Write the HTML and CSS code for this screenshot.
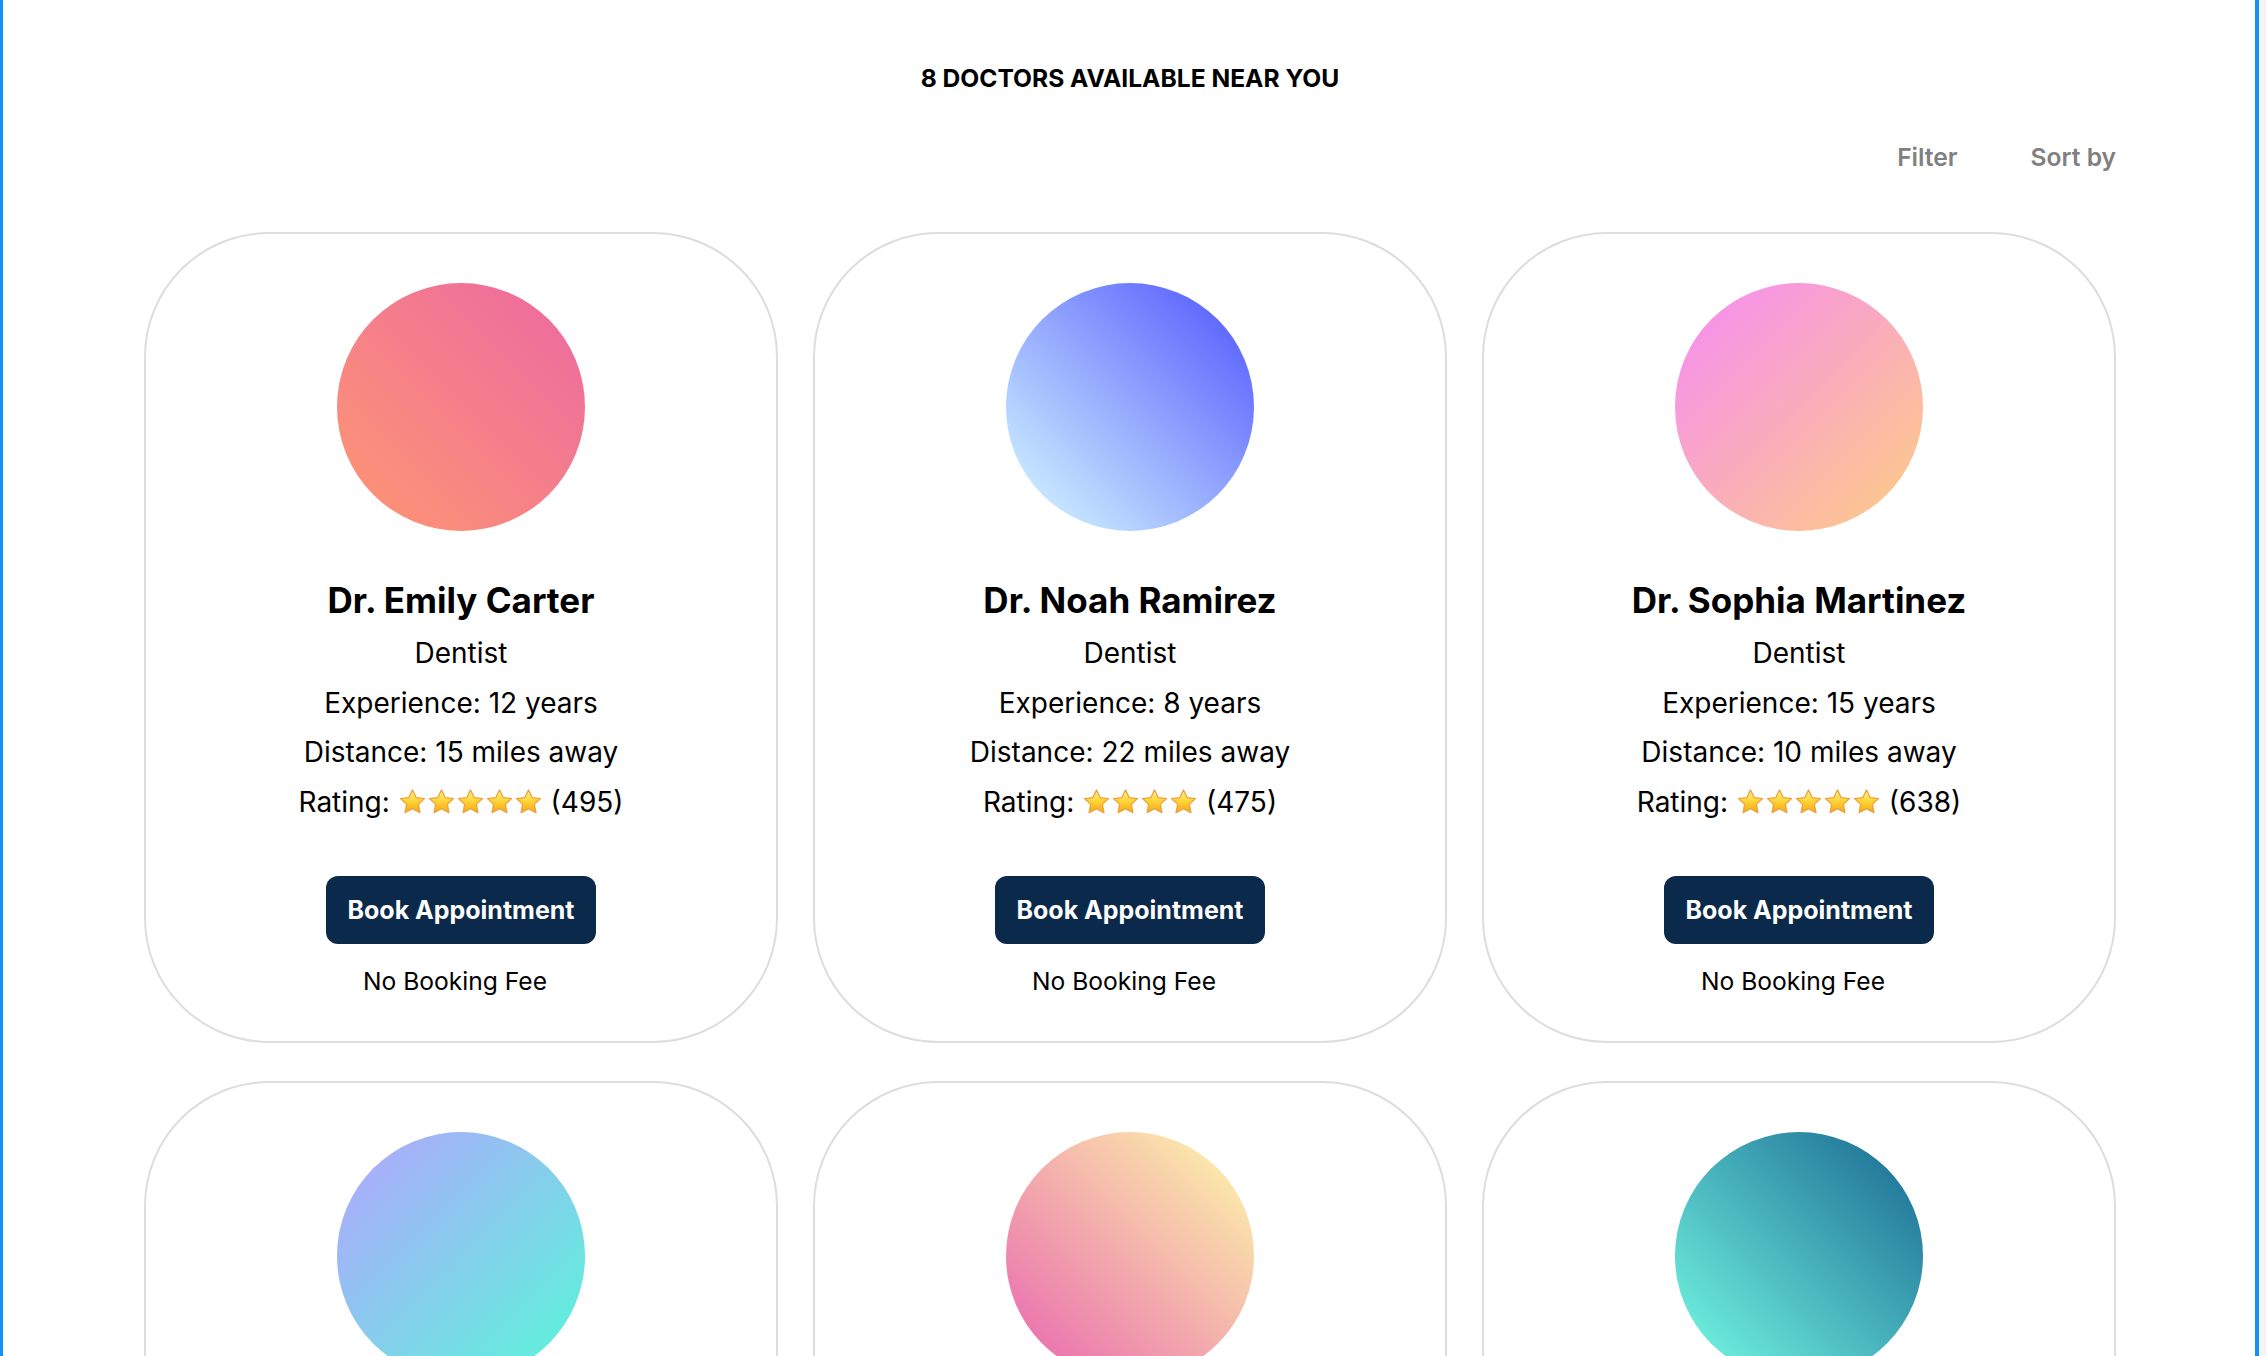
FILE: index.html
```html
<!DOCTYPE html>
<html lang="en">
<head>
<meta charset="utf-8">
<title>Doctors near you</title>
<link rel="stylesheet" href="styles.css">
</head>
<body>
<svg width="0" height="0" class="defs" aria-hidden="true">
  <defs>
    <linearGradient id="starfill" x1="0" y1="0" x2="0" y2="1">
      <stop offset="0" stop-color="#fff3a0"/>
      <stop offset="0.45" stop-color="#ffd83a"/>
      <stop offset="1" stop-color="#f6a819"/>
    </linearGradient>
    <symbol id="star" viewBox="0 0 24 24">
      <path d="M12 1.6l3 6.3 6.9.85-5.05 4.8 1.3 6.85L12 17.1 5.85 20.4l1.3-6.85L2.1 8.75l6.9-.85z" fill="url(#starfill)" stroke="#eea23a" stroke-width="1.1" stroke-linejoin="round"/>
    </symbol>
  </defs>
</svg>
<div class="app">
  <header class="head">
    <h1 class="title">8 DOCTORS AVAILABLE NEAR YOU</h1>
  </header>
  <div class="toolbar">
    <button class="tool">Filter</button>
    <button class="tool">Sort by</button>
  </div>
  <main class="grid">
    <article class="card">
      <div class="avatar av-1"></div>
      <h2 class="name">Dr. Emily Carter</h2>
      <p class="line">Dentist</p>
      <p class="line">Experience: 12 years</p>
      <p class="line">Distance: 15 miles away</p>
      <p class="line">Rating: <span class="stars"><svg class="star"><use href="#star"/></svg><svg class="star"><use href="#star"/></svg><svg class="star"><use href="#star"/></svg><svg class="star"><use href="#star"/></svg><svg class="star"><use href="#star"/></svg></span> (495)</p>
      <button class="book">Book Appointment</button>
      <p class="fee">No Booking Fee</p>
    </article>
    <article class="card">
      <div class="avatar av-2"></div>
      <h2 class="name">Dr. Noah Ramirez</h2>
      <p class="line">Dentist</p>
      <p class="line">Experience: 8 years</p>
      <p class="line">Distance: 22 miles away</p>
      <p class="line">Rating: <span class="stars"><svg class="star"><use href="#star"/></svg><svg class="star"><use href="#star"/></svg><svg class="star"><use href="#star"/></svg><svg class="star"><use href="#star"/></svg></span> (475)</p>
      <button class="book">Book Appointment</button>
      <p class="fee">No Booking Fee</p>
    </article>
    <article class="card">
      <div class="avatar av-3"></div>
      <h2 class="name">Dr. Sophia Martinez</h2>
      <p class="line">Dentist</p>
      <p class="line">Experience: 15 years</p>
      <p class="line">Distance: 10 miles away</p>
      <p class="line">Rating: <span class="stars"><svg class="star"><use href="#star"/></svg><svg class="star"><use href="#star"/></svg><svg class="star"><use href="#star"/></svg><svg class="star"><use href="#star"/></svg><svg class="star"><use href="#star"/></svg></span> (638)</p>
      <button class="book">Book Appointment</button>
      <p class="fee">No Booking Fee</p>
    </article>
    <article class="card">
      <div class="avatar av-4"></div>
      <h2 class="name">Dr. Liam Johnson</h2>
      <p class="line">Dentist</p>
      <p class="line">Experience: 10 years</p>
      <p class="line">Distance: 18 miles away</p>
      <p class="line">Rating: <span class="stars"><svg class="star"><use href="#star"/></svg><svg class="star"><use href="#star"/></svg><svg class="star"><use href="#star"/></svg><svg class="star"><use href="#star"/></svg></span> (412)</p>
      <button class="book">Book Appointment</button>
      <p class="fee">No Booking Fee</p>
    </article>
    <article class="card">
      <div class="avatar av-5"></div>
      <h2 class="name">Dr. Olivia Brown</h2>
      <p class="line">Dentist</p>
      <p class="line">Experience: 6 years</p>
      <p class="line">Distance: 12 miles away</p>
      <p class="line">Rating: <span class="stars"><svg class="star"><use href="#star"/></svg><svg class="star"><use href="#star"/></svg><svg class="star"><use href="#star"/></svg><svg class="star"><use href="#star"/></svg><svg class="star"><use href="#star"/></svg></span> (389)</p>
      <button class="book">Book Appointment</button>
      <p class="fee">No Booking Fee</p>
    </article>
    <article class="card">
      <div class="avatar av-6"></div>
      <h2 class="name">Dr. Ethan Wilson</h2>
      <p class="line">Dentist</p>
      <p class="line">Experience: 20 years</p>
      <p class="line">Distance: 25 miles away</p>
      <p class="line">Rating: <span class="stars"><svg class="star"><use href="#star"/></svg><svg class="star"><use href="#star"/></svg><svg class="star"><use href="#star"/></svg><svg class="star"><use href="#star"/></svg><svg class="star"><use href="#star"/></svg></span> (702)</p>
      <button class="book">Book Appointment</button>
      <p class="fee">No Booking Fee</p>
    </article>
    <article class="card">
      <div class="avatar av-1"></div>
      <h2 class="name">Dr. Ava Thompson</h2>
      <p class="line">Dentist</p>
      <p class="line">Experience: 9 years</p>
      <p class="line">Distance: 14 miles away</p>
      <p class="line">Rating: <span class="stars"><svg class="star"><use href="#star"/></svg><svg class="star"><use href="#star"/></svg><svg class="star"><use href="#star"/></svg><svg class="star"><use href="#star"/></svg></span> (356)</p>
      <button class="book">Book Appointment</button>
      <p class="fee">No Booking Fee</p>
    </article>
    <article class="card">
      <div class="avatar av-2"></div>
      <h2 class="name">Dr. Mason Lee</h2>
      <p class="line">Dentist</p>
      <p class="line">Experience: 14 years</p>
      <p class="line">Distance: 9 miles away</p>
      <p class="line">Rating: <span class="stars"><svg class="star"><use href="#star"/></svg><svg class="star"><use href="#star"/></svg><svg class="star"><use href="#star"/></svg><svg class="star"><use href="#star"/></svg><svg class="star"><use href="#star"/></svg></span> (521)</p>
      <button class="book">Book Appointment</button>
      <p class="fee">No Booking Fee</p>
    </article>
  </main>
</div>
</body>
</html>
```

FILE: styles.css
```css
* { box-sizing: border-box; }

html, body {
  margin: 0;
  padding: 0;
}

body {
  background: #f4f4f4;
  font-family: Inter, "Noto Sans", "Liberation Sans", sans-serif;
  color: #000;
  overflow: hidden;
}

.defs {
  position: absolute;
  width: 0;
  height: 0;
}

.app {
  width: 2259px;
  height: 100vh;
  overflow: hidden;
  background: #fff;
  border-left: 3px solid #1a8ef4;
  border-right: 4px solid #1a8ef4;
  padding-left: 2px;
  display: flex;
  flex-direction: column;
  align-items: center;
}

.head {
  padding-top: 63px;
}

.title {
  margin: 0;
  font-size: 24.6px;
  line-height: 30px;
  font-weight: 700;
  text-align: center;
}

.toolbar {
  width: 1972px;
  display: flex;
  justify-content: flex-end;
  gap: 73px;
  margin-top: 49px;
}

.tool {
  border: 0;
  background: none;
  padding: 0;
  font-family: inherit;
  font-size: 24.6px;
  line-height: 30px;
  font-weight: 600;
  color: #808080;
}

.grid {
  margin-top: 60px;
  display: grid;
  grid-template-columns: repeat(3, 634px);
  gap: 38px 35px;
}

.card {
  border: 2px solid #dddddd;
  border-radius: 125px;
  padding: 49px 20px 45px;
  display: flex;
  flex-direction: column;
  align-items: center;
  text-align: center;
}

.avatar {
  width: 248px;
  height: 248px;
  border-radius: 50%;
}

.av-1 { background: linear-gradient(45deg, #fe9771, #ec68a2); }
.av-2 { background: linear-gradient(45deg, #dafeff, #4c52fe); }
.av-3 { background: linear-gradient(135deg, #f68af6, #fdce82); }
.av-4 { background: linear-gradient(135deg, #b4a4ff, #56f8d8); }
.av-5 { background: linear-gradient(45deg, #e862af, #fffcaa); }
.av-6 { background: linear-gradient(45deg, #78ffe6, #176590); }

.name {
  margin: 48px 0 8px;
  font-size: 35px;
  line-height: 42px;
  font-weight: 700;
}

.line {
  margin: 0;
  font-size: 28px;
  line-height: 49.5px;
  display: flex;
  align-items: center;
  white-space: pre;
}

.stars {
  display: inline-flex;
}

.star {
  width: 29px;
  height: 29px;
}

.book {
  margin-top: 49px;
  height: 68px;
  padding: 0 21px;
  border: 0;
  border-radius: 12px;
  background: #0b2a4b;
  color: #fff;
  font-family: inherit;
  font-size: 25px;
  font-weight: 700;
}

.fee {
  margin: 22px 12px 0 0;
  font-size: 24.6px;
  line-height: 30px;
}
```
